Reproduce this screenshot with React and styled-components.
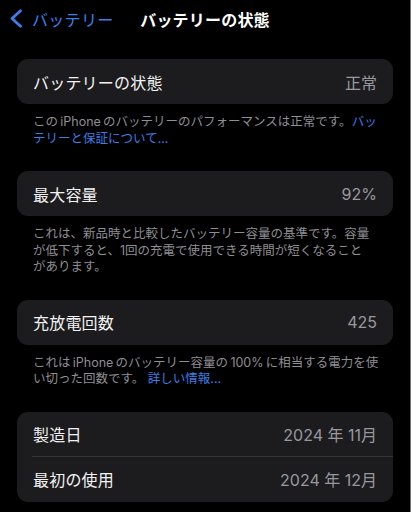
import React from "react";
import styled, { createGlobalStyle } from "styled-components";

const GlobalStyle = createGlobalStyle`
  html, body {
    margin: 0;
    padding: 0;
    background: #000;
  }
  body {
    font-family: "Inter", "Noto Sans CJK JP", sans-serif;
    -webkit-font-smoothing: antialiased;
  }
`;

const Screen = styled.div`
  box-sizing: border-box;
  width: 411px;
  height: 512px;
  overflow: hidden;
  background: #000;
  border-right: 1px solid #737373;
  color: #fff;
`;

const NavBar = styled.div`
  display: grid;
  grid-template-columns: 1fr auto 1fr;
  align-items: center;
  height: 37px;
`;

const BackButton = styled.div`
  display: flex;
  align-items: center;
  gap: 9px;
  padding-left: 9px;
  color: #3a80ec;
  font-size: 16px;
  letter-spacing: 0.3px;
`;

const Title = styled.div`
  font-size: 16px;
  font-weight: 700;
  letter-spacing: 0.2px;
`;

const Content = styled.div`
  padding: 22px 17px 0 17px;
`;

const Section = styled.div`
  margin-bottom: ${(p) => (p.$last ? 0 : 24)}px;
`;

const Card = styled.div`
  background: #1c1c1e;
  border-radius: 11px;
  overflow: hidden;
`;

const Row = styled.div`
  display: flex;
  align-items: center;
  justify-content: space-between;
  height: 45px;
  padding: 0 16px 0 16px;
  position: relative;
  ${(p) =>
    p.$divider &&
    `
    &::after {
      content: "";
      position: absolute;
      left: 15px;
      right: 0;
      bottom: 0;
      height: 1px;
      background: #343436;
    }
  `}
`;

const Label = styled.span`
  font-size: 16px;
  color: #f2f2f2;
  letter-spacing: 0.2px;
`;

const Value = styled.span`
  font-size: 16px;
  color: #98989e;
`;

const Footnote = styled.p`
  margin: 0;
  padding: 10px 12px 0 16px;
  font-size: 12.5px;
  line-height: 16.5px;
  color: #8e8e93;
`;

const Link = styled.span`
  color: #3a7fe6;
`;

const Keep = styled.span`
  white-space: nowrap;
`;

function Chevron() {
  return (
    <svg width="14" height="19" viewBox="0 0 14 19">
      <path
        d="M11.5 1.8 L3 9.5 L11.5 17.2"
        fill="none"
        stroke="#3a80ec"
        strokeWidth="2.8"
        strokeLinecap="round"
        strokeLinejoin="round"
      />
    </svg>
  );
}

export default function App() {
  return (
    <>
      <GlobalStyle />
      <Screen>
        <NavBar>
          <BackButton>
            <Chevron />
            バッテリー
          </BackButton>
          <Title>バッテリーの状態</Title>
          <div />
        </NavBar>
        <Content>
          <Section>
            <Card>
              <Row>
                <Label>バッテリーの状態</Label>
                <Value>正常</Value>
              </Row>
            </Card>
            <Footnote>
              {"この\u2009iPhone\u2009のバッテリーのパフォーマンスは正常です。"}
              <Link>バッテリーと保証について...</Link>
            </Footnote>
          </Section>
          <Section>
            <Card>
              <Row>
                <Label>最大容量</Label>
                <Value>92%</Value>
              </Row>
            </Card>
            <Footnote>
              これは、新品時と比較したバッテリー容量の基準です。容量が低下すると、1回の充電で使用できる時間が短くなること<Keep>があります。</Keep>
            </Footnote>
          </Section>
          <Section>
            <Card>
              <Row>
                <Label>充放電回数</Label>
                <Value>425</Value>
              </Row>
            </Card>
            <Footnote>
              {"これは\u2009iPhone\u2009のバッテリー容量の\u2009100%\u2009に相当する電力を使い切った回数です。 "}
              <Link>詳しい情報...</Link>
            </Footnote>
          </Section>
          <Section $last>
            <Card>
              <Row $divider>
                <Label>製造日</Label>
                <Value>2024 年 11月</Value>
              </Row>
              <Row>
                <Label>最初の使用</Label>
                <Value>2024 年 12月</Value>
              </Row>
            </Card>
          </Section>
        </Content>
      </Screen>
    </>
  );
}
